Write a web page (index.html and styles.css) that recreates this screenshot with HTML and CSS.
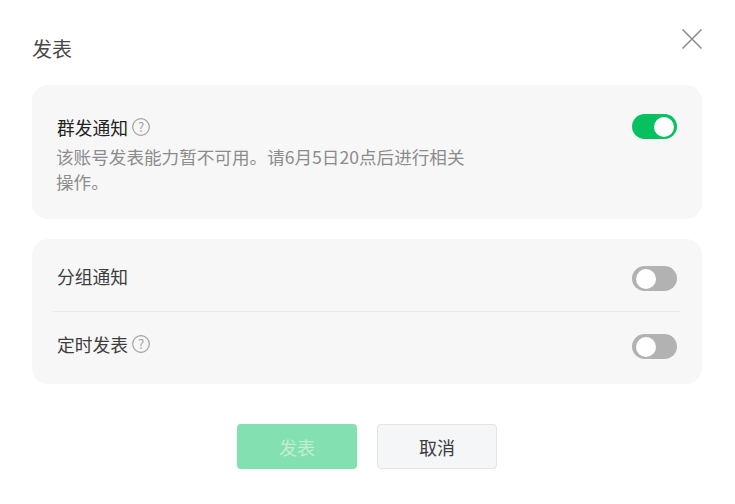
FILE: index.html
```html
<!doctype html>
<html lang="zh-CN">
  <head>
    <meta charset="UTF-8" />
    <meta name="viewport" content="width=device-width, initial-scale=1.0" />
    <title>发表</title>
    <link rel="stylesheet" href="styles.css">
  </head>
  <body>
    <div class="dialog">
      <div class="dialog-header">
        <h2>发表</h2>
        <button class="close-btn" aria-label="关闭">
          <svg width="20" height="20" viewBox="0 0 20 20">
            <path d="M0.5 0.5L19.5 19.5M19.5 0.5L0.5 19.5" stroke="#8a8a8a" stroke-width="1.5" fill="none" />
          </svg>
        </button>
      </div>

      <!-- Mass send -->
      <div class="card card-notice">
        <div class="notice-text">
          <div class="row-title">
            <span class="title-strong">群发通知</span>
            <svg class="help-icon" width="18" height="18" viewBox="0 0 18 18">
              <circle cx="9" cy="9" r="8.3" stroke="#a0a0a0" stroke-width="1.2" fill="none" />
              <text x="9" y="13.5" text-anchor="middle" class="help-mark">?</text>
            </svg>
          </div>
          <p class="notice-desc">该账号发表能力暂不可用。请6月5日20点后进行相关操作。</p>
        </div>
        <div class="switch switch-on"></div>
      </div>

      <!-- Options -->
      <div class="card card-options">
        <div class="option-row">
          <div class="row-title">分组通知</div>
          <div class="switch"></div>
        </div>
        <div class="option-row">
          <div class="row-title">
            定时发表
            <svg class="help-icon" width="18" height="18" viewBox="0 0 18 18">
              <circle cx="9" cy="9" r="8.3" stroke="#a0a0a0" stroke-width="1.2" fill="none" />
              <text x="9" y="13.5" text-anchor="middle" class="help-mark">?</text>
            </svg>
          </div>
          <div class="switch"></div>
        </div>
      </div>

      <div class="dialog-footer">
        <button class="btn btn-primary" disabled>发表</button>
        <button class="btn btn-default">取消</button>
      </div>
    </div>
  </body>
</html>
```

FILE: styles.css
```css
* {
  margin: 0;
  padding: 0;
  box-sizing: border-box;
}

body {
  font-family: "Noto Sans CJK SC", "Noto Sans", sans-serif;
  background: #fff;
  color: #3d3d3d;
  overflow: hidden;
}

.dialog {
  width: 735px;
  height: 504px;
  padding: 29px 33px 0 32px;
}

.dialog-header {
  display: flex;
  justify-content: space-between;
  align-items: flex-start;
  height: 56px;
}

.dialog-header h2 {
  font-size: 20px;
  line-height: 40px;
  font-weight: 400;
  color: #484848;
}

.close-btn {
  width: 20px;
  height: 20px;
  border: none;
  background: none;
  cursor: pointer;
}

.close-btn svg {
  display: block;
}

.card {
  background: #f7f7f7;
  border-radius: 16px;
}

.card-notice {
  display: flex;
  justify-content: space-between;
  align-items: flex-start;
  height: 134px;
  padding: 29px 25px 0;
  margin-bottom: 20px;
}

.notice-text {
  width: 415px;
}

.row-title {
  display: flex;
  align-items: center;
  gap: 4px;
  font-size: 17.8px;
  line-height: 26px;
}

.title-strong {
  color: #222;
}

.help-icon {
  display: block;
}

.help-mark {
  font-size: 13px;
  fill: #a0a0a0;
}

.notice-desc {
  font-size: 17.6px;
  line-height: 25px;
  color: #8c8c8c;
  margin-top: 4px;
  margin-left: -1px;
}

.card-options {
  height: 145px;
  padding: 4px 22px 0 20px;
}

.option-row {
  display: flex;
  justify-content: space-between;
  align-items: center;
  height: 68px;
  padding: 3px 3px 0 5px;
}

.option-row .row-title {
  padding-bottom: 5px;
}

.option-row + .option-row {
  padding-top: 2px;
  border-top: 1px solid #ebebeb;
}

.switch {
  width: 45px;
  height: 25px;
  padding: 2.5px 3px 2.5px 4px;
  border-radius: 13px;
  background: #b2b2b2;
  display: flex;
  flex-shrink: 0;
}

.switch::after {
  content: "";
  width: 20px;
  height: 20px;
  border-radius: 50%;
  background: #fff;
}

.switch-on {
  background: #07c160;
  justify-content: flex-end;
}

.dialog-footer {
  display: flex;
  justify-content: center;
  gap: 20px;
  margin-top: 40px;
}

.btn {
  width: 120px;
  height: 45px;
  border-radius: 4px;
  font-family: inherit;
  font-size: 18px;
  cursor: pointer;
}

.btn-primary {
  background: #83e0b0;
  border: none;
  color: #c3edd6;
}

.btn-default {
  background: #f5f6f8;
  border: 1px solid #e3e4e8;
  color: #3d3d3d;
}
```
